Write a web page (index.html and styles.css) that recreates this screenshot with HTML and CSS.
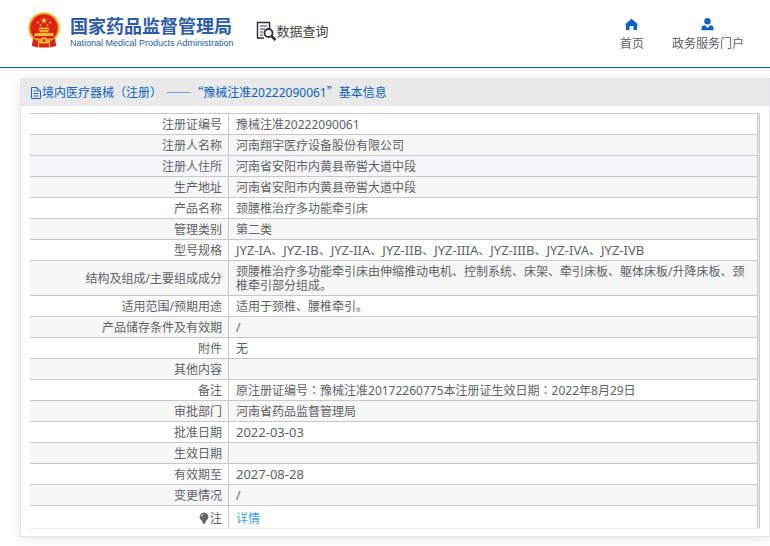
FILE: index.html
```html
<!DOCTYPE html>
<html lang="zh-CN">
<head>
<meta charset="utf-8">
<title>数据查询</title>
<link rel="stylesheet" href="styles.css">
</head>
<body>
<header class="header">
  <a class="brand" href="#">
    <svg class="emblem" viewBox="1 0 32 36" aria-hidden="true">
      <path d="M7 25 5 34l7-2 5 3 5-3 7 2-2-9z" fill="#d81e1a"/>
      <circle cx="17" cy="16" r="15.8" fill="#edb52f"/>
      <circle cx="17" cy="16" r="13.700" fill="#df1f18"/>
      <path d="m17 5 .9 2.4h2.6l-2.1 1.6.8 2.5-2.2-1.5-2.2 1.5.8-2.5-2.1-1.6h2.6z" fill="#f8cf3c"/>
      <g fill="#f4c236"><circle cx="11" cy="10.500" r="1"/><circle cx="23" cy="10.500" r="1"/><circle cx="13.500" cy="13.200" r="1"/><circle cx="20.500" cy="13.200" r="1"/></g>
      <path d="M11 17.500 13 15.500h8l2 2zM12.500 18.200h9v2h-9zM8 21h18l1 3H7z" fill="#f3bd33"/>
      <path d="M6 25.500c4 1.800 18 1.800 22 0l-1 3c-5 2.300-15 2.300-20 0z" fill="#e5a729"/>
      <circle cx="17" cy="28.500" r="3.200" fill="#f3bd33"/><circle cx="17" cy="28.500" r="1.500" fill="#c93316"/>
      <path d="M6 26.500 11 29v6.500L5 34zM28 26.500 23 29v6.500l6-1.500zM12 32.500l5-1 5 1v3H12z" fill="#dc2219"/>
      <path d="M11.500 31v4M22.500 31v4" stroke="#edb52f" stroke-width="1.200"/>
    </svg>
    <span class="brand-text">
      <span class="brand-cn">国家药品监督管理局</span>
      <span class="brand-en">National Medical Products Administration</span>
    </span>
  </a>
  <div class="section">
    <svg class="search-icon" viewBox="0 0 21 20" fill="none" stroke="#34343c" aria-hidden="true">
      <path d="M8 17H1.500V1.500h12V8" stroke-width="1.500"/>
      <path d="M4 5h7M4 8h5M4 11h3M4 14h3" stroke-width="1.200"/>
      <circle cx="12.500" cy="12" r="4" stroke-width="1.800"/>
      <path d="m15.500 15 4 4" stroke-width="2.600"/>
    </svg>
    <span>数据查询</span>
  </div>
  <nav class="nav">
    <a href="#">
      <svg viewBox="0 0 13 13" aria-hidden="true"><path d="M6.500.8.5 6v1H1v5h3.500V8h4v4H12V7h.5V6z" fill="#0b62c4"/></svg>
      <span>首页</span>
    </a>
    <a href="#">
      <svg viewBox="0 0 13 13" aria-hidden="true"><circle cx="6.500" cy="3.300" r="3.200" fill="#0b62c4"/><path d="M.5 12.200V10.500C.5 8.500 2 7.300 4 7.300L6.500 10 9 7.300c2 0 3.500 1.200 3.500 3.200v1.700z" fill="#0b62c4"/></svg>
      <span>政务服务门户</span>
    </a>
  </nav>
</header>
<div class="strip"></div>
<main class="panel">
  <h1 class="title">
    <svg viewBox="0 0 10 12" fill="none" stroke="#1a66c4" aria-hidden="true"><path d="M.5.500h5.500l3.500 3.500v7.500h-9zM6 .5V4h3.500M2.500 6.500h5M2.500 9h5M2.500 4h2"/></svg>
    <span>境内医疗器械<span class="wide" lang="zh-TW">（</span>注册<span class="wide" lang="zh-TW">）</span> <span class="dash">——</span><span class="cjk">“</span>豫械注准20222090061<span class="cjk">”</span>基本信息</span>
  </h1>
  <div class="content">
    <table class="info">
      <tbody>
      <tr><th scope="row">注册证编号</th><td>豫械注准20222090061</td></tr>
      <tr><th scope="row">注册人名称</th><td>河南翔宇医疗设备股份有限公司</td></tr>
      <tr class="active"><th scope="row">注册人住所</th><td>河南省安阳市内黄县帝喾大道中段</td></tr>
      <tr><th scope="row">生产地址</th><td>河南省安阳市内黄县帝喾大道中段</td></tr>
      <tr><th scope="row">产品名称</th><td>颈腰椎治疗多功能牵引床</td></tr>
      <tr><th scope="row">管理类别</th><td>第二类</td></tr>
      <tr><th scope="row">型号规格</th><td><span class="code">JYZ-IA</span>、<span class="code">JYZ-IB</span>、<span class="code">JYZ-IIA</span>、<span class="code">JYZ-IIB</span>、<span class="code">JYZ-IIIA</span>、<span class="code">JYZ-IIIB</span>、<span class="code">JYZ-IVA</span>、<span class="code">JYZ-IVB</span></td></tr>
      <tr><th scope="row">结构及组成/主要组成成分</th><td>颈腰椎治疗多功能牵引床由伸缩推动电机、控制系统、床架、牵引床板、躯体床板/升降床板、颈椎牵引部分组成。</td></tr>
      <tr><th scope="row">适用范围/预期用途</th><td>适用于颈椎、腰椎牵引。</td></tr>
      <tr><th scope="row">产品储存条件及有效期</th><td>/</td></tr>
      <tr><th scope="row">附件</th><td>无</td></tr>
      <tr><th scope="row">其他内容</th><td></td></tr>
      <tr><th scope="row">备注</th><td>原注册证编号<span class="wide" lang="zh-TW">：</span>豫械注准20172260775本注册证生效日期<span class="wide" lang="zh-TW">：</span>2022年8月29日</td></tr>
      <tr><th scope="row">审批部门</th><td>河南省药品监督管理局</td></tr>
      <tr><th scope="row">批准日期</th><td><span class="code">2022-03-03</span></td></tr>
      <tr><th scope="row">生效日期</th><td></td></tr>
      <tr><th scope="row">有效期至</th><td><span class="code">2027-08-28</span></td></tr>
      <tr><th scope="row">变更情况</th><td>/</td></tr>
      <tr class="last"><th scope="row"><svg class="bulb" viewBox="0 0 10 12" aria-hidden="true"><path d="M5 .5a4.300 4.300 0 0 0-3 7.400L3.500 9.500h3L8 7.900A4.300 4.300 0 0 0 5 .5zM3.500 9.500h3V11l-.8.800H4.300L3.500 11z" fill="#606266"/><path d="M2.500 4.500C2.700 3.300 3.500 2.500 4.500 2.400" fill="none" stroke="#fff"/></svg>注</th><td><a href="#">详情</a></td></tr>
      </tbody>
    </table>
  </div>
</main>
</body>
</html>
```
FILE: styles.css
```css
* {
  box-sizing: border-box;
}

body {
  margin: 0;
  background: #fff;
  color: #606266;
  font-family: "Noto Sans", "Noto Sans CJK SC", sans-serif;
  font-size: 12px;
  line-height: 14px;
}

a {
  color: inherit;
  text-decoration: none;
}

svg {
  display: block;
  flex: none;
}

.header {
  display: flex;
  align-items: flex-start;
  height: 68px;
  padding: 12px 26px 0 28px;
  border-bottom: 1px solid #0b62c4;
}

.brand {
  display: flex;
  gap: 10px;
  color: #2c5cab;
}

.emblem {
  width: 32px;
  height: 36px;
}

.brand-text {
  display: flex;
  flex-direction: column;
  padding-top: 4px;
  white-space: nowrap;
}

.brand-cn {
  font-size: 18px;
  font-weight: 700;
  line-height: 20px;
}

.brand-en {
  font-family: "Liberation Sans", sans-serif;
  font-size: 9px;
  line-height: 14px;
}

.section {
  display: flex;
  align-items: center;
  margin-left: 22px;
  padding-top: 9px;
  color: #444;
  font-size: 13px;
}

.search-icon {
  width: 21px;
  height: 20px;
}

.nav {
  display: flex;
  gap: 28px;
  margin-left: auto;
  padding-top: 6px;
}

.nav a {
  display: flex;
  flex-direction: column;
  align-items: center;
  gap: 6px;
}

.nav svg {
  width: 13px;
  height: 13px;
}

.strip {
  height: 3px;
  background: repeating-conic-gradient(#ececec 0 25%, #fff 0 50%) 0 0 / 2px 2px;
}

.panel {
  margin: 7px 0 10px 20px;
  border: 1px solid #e6e6ea;
  border-top: 0;
  box-shadow: 0 2px 12px rgba(0, 0, 0, 0.1);
}

.title {
  display: flex;
  align-items: center;
  height: 28px;
  margin: 0;
  padding: 2px 10px 0;
  background: #e9e9e9;
  color: #0b62c4;
  font-size: 12px;
  font-weight: 400;
}

.title svg {
  width: 10px;
  height: 12px;
  margin-right: 1px;
}

.cjk,
.dash {
  font-family: "Noto Sans CJK SC", sans-serif;
  line-height: 0;
}

.wide {
  font-family: "Noto Sans CJK TC", sans-serif;
  line-height: 0;
}

.dash {
  font-size: 13px;
}

.code {
  font-size: 13px;
  line-height: 0;
}

.content {
  padding: 7px 9px;
}

.info {
  width: 100%;
  border-spacing: 0;
  border-right: 1px solid #c8c9cc;
  border-bottom: 1px solid #ebeef5;
  padding-right: 1px;
  background: #ebeef5;
}

.info th,
.info td {
  padding: 4px 6px 2px;
  border-top: 1px solid #c8c9cc;
  border-right: 1px solid #c8c9cc;
  background: #fff;
  font-weight: 400;
  text-align: left;
}

.info th {
  width: 199px;
  text-align: right;
}

.info td {
  height: 21px;
  padding-left: 7px;
}

.info tr:nth-child(even) > * {
  background: #f7f7f7;
}

.info .active > * {
  background: #f5f7fa;
}

.info .last > * {
  padding-top: 6px;
}

.info .last a {
  color: #409eff;
}

.bulb {
  display: inline-block;
  width: 10px;
  height: 12px;
  margin-right: 1px;
  vertical-align: -1px;
}
```
